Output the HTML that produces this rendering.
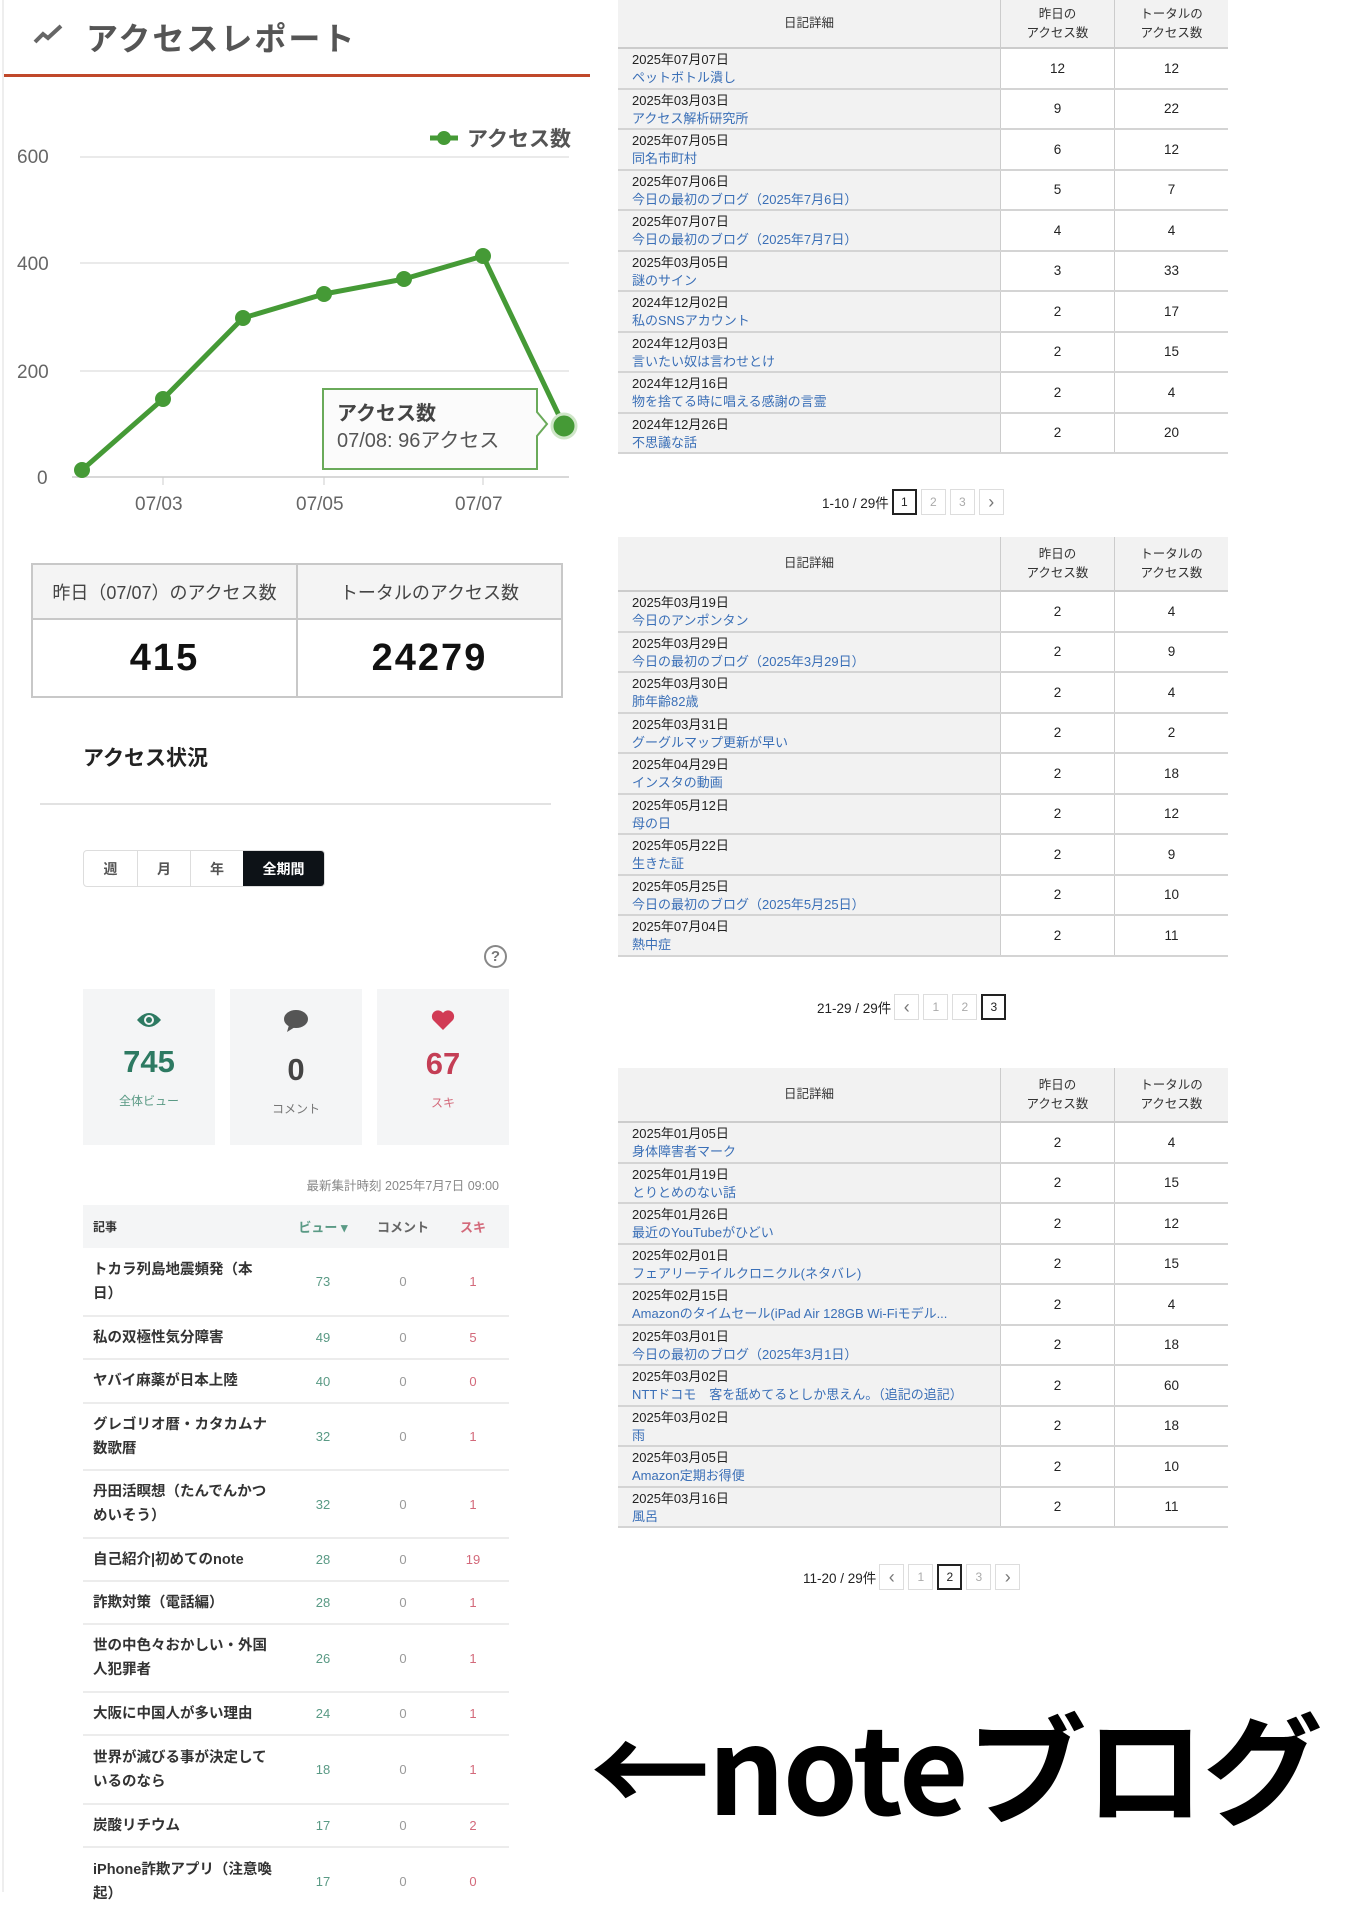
<!DOCTYPE html>
<html><head><meta charset="utf-8"><style>
*{margin:0;padding:0;box-sizing:border-box}
body{width:1346px;height:1892px;background:#fff;position:relative;overflow:hidden;font-family:"Liberation Sans","Noto Sans CJK JP",sans-serif;color:#222}
.a{position:absolute}
.tbl{position:absolute;left:618px;width:610px;font-size:13px}
.tbl .hd{display:flex;background:#f2f2f2;border-bottom:2px solid #ccc;color:#333}
.tbl .hd div{display:flex;align-items:center;justify-content:center;text-align:center;line-height:19px;font-size:12.5px}
.c1{width:383px;border-right:1px solid #ccc}
.c2{width:114px;border-right:1px solid #ccc}
.c3{width:113px}
.tbl .r{display:flex;height:40.5px;border-bottom:2px solid #d4d4d4}
.tbl .r .c1{background:#f2f2f2;padding:2px 0 0 14px;line-height:18px;font-size:13px}
.tbl .r .c1 span{color:#3a6fb7;display:block;white-space:nowrap;overflow:hidden}
.tbl .r .c2,.tbl .r .c3{display:flex;align-items:center;justify-content:center;background:#fff;font-size:13.5px}
.pg{position:absolute;display:flex;align-items:center;font-size:13.5px;color:#222}
.pg b{font-weight:normal;margin-right:3px}
.pg i{font-style:normal;width:25px;height:26px;border:1px solid #ddd;display:flex;align-items:center;justify-content:center;color:#aaa;margin-right:4px;font-size:12px}
.pg i.ar{font-size:18px;color:#777}
.pg i.on{border:2px solid #222;color:#222}
.lst{position:absolute;left:83px;width:426px}
.lst .row{display:flex;align-items:center;border-bottom:2px solid #ececec;font-weight:bold;font-size:14.5px;color:#333}
.lst .t{width:200px;padding-left:10px;padding-right:10px;line-height:24px}
.lst .v{width:80px;text-align:center;color:#5a9a85;font-weight:normal;font-size:13px}
.lst .cm{width:80px;text-align:center;color:#999;font-weight:normal;font-size:13px}
.lst .s{width:60px;text-align:center;color:#d3697a;font-weight:normal;font-size:13px}
</style></head><body>
<div class="a" style="left:2px;top:0;width:2px;height:1892px;background:#eee"></div>
<svg class="a" style="left:33px;top:22px" width="32" height="24" viewBox="0 0 32 24"><polyline points="2,20 10,12 15,16 28,4" fill="none" stroke="#666" stroke-width="4"/></svg>
<div class="a" style="left:86px;top:14px;font-size:32px;font-weight:bold;color:#555;letter-spacing:2px">アクセスレポート</div>
<div class="a" style="left:4px;top:74px;width:586px;height:3px;background:#c0482a"></div>

<svg class="a" style="left:0;top:100px" width="590" height="430">
<g font-family="Liberation Sans, sans-serif" font-size="19" fill="#666">
<text x="17" y="63">600</text><text x="17" y="170">400</text><text x="17" y="278">200</text><text x="37" y="384">0</text>
<text x="135" y="410">07/03</text><text x="296" y="410">07/05</text><text x="455" y="410">07/07</text>
</g>
<g stroke="#e4e4e4" stroke-width="1.5"><line x1="80" y1="57" x2="569" y2="57"/><line x1="80" y1="163" x2="569" y2="163"/><line x1="80" y1="271" x2="569" y2="271"/><line x1="72" y1="377" x2="569" y2="377" stroke="#ccc"/></g>
<g stroke="#ccc"><line x1="163" y1="377" x2="163" y2="385"/><line x1="324" y1="377" x2="324" y2="385"/><line x1="483" y1="377" x2="483" y2="385"/></g>
<line x1="430" y1="38" x2="458" y2="38" stroke="#459a36" stroke-width="5"/><circle cx="444" cy="38" r="7" fill="#459a36"/>
<text x="467" y="46" font-size="21" font-weight="bold" fill="#555" font-family="Noto Sans CJK JP,sans-serif">アクセス数</text>
<polyline points="82,370 163,299 243,218 324,194 404,179 483,156 564,326" fill="none" stroke="#459a36" stroke-width="5" stroke-linejoin="round"/>
<g fill="#459a36"><circle cx="82" cy="370" r="8"/><circle cx="163" cy="299" r="8"/><circle cx="243" cy="218" r="8"/><circle cx="324" cy="194" r="8"/><circle cx="404" cy="179" r="8"/><circle cx="483" cy="156" r="8"/><circle cx="564" cy="326" r="12" stroke="#cfe6c8" stroke-width="3"/></g>
<path d="M323,289 H537 V312 L547,324 L537,336 V369 H323 Z" fill="#fbfbfb" stroke="#6aaa5a" stroke-width="2"/>
<text x="337" y="320" font-size="20" font-weight="bold" fill="#444" font-family="Noto Sans CJK JP,sans-serif">アクセス数</text>
<text x="337" y="347" font-size="20" fill="#555" font-family="Liberation Sans,Noto Sans CJK JP,sans-serif">07/08: 96アクセス</text>
</svg>

<div class="a" style="left:31px;top:563px;width:532px;height:135px;border:2px solid #c8c8c8">
<div style="display:flex;height:55px;background:#f4f4f4;border-bottom:2px solid #c8c8c8;font-size:18px;color:#444">
<div style="width:265px;border-right:2px solid #c8c8c8;display:flex;align-items:center;justify-content:center">昨日（07/07）のアクセス数</div>
<div style="flex:1;display:flex;align-items:center;justify-content:center">トータルのアクセス数</div></div>
<div style="display:flex;height:76px;font-size:38px;font-weight:bold;color:#111;letter-spacing:2px">
<div style="width:265px;border-right:2px solid #c8c8c8;display:flex;align-items:center;justify-content:center">415</div>
<div style="flex:1;display:flex;align-items:center;justify-content:center">24279</div></div></div>

<div class="a" style="left:83px;top:742px;font-size:21px;font-weight:bold;color:#222">アクセス状況</div>
<div class="a" style="left:40px;top:803px;width:511px;height:2px;background:#e2e2e2"></div>
<div class="a" style="left:83px;top:850px;width:242px;height:37px;border:1px solid #ddd;border-radius:4px;display:flex;font-size:14px;font-weight:bold;color:#555;overflow:hidden">
<div style="width:54px;display:flex;align-items:center;justify-content:center;border-right:1px solid #ddd">週</div>
<div style="width:53px;display:flex;align-items:center;justify-content:center;border-right:1px solid #ddd">月</div>
<div style="width:52px;display:flex;align-items:center;justify-content:center">年</div>
<div style="flex:1;display:flex;align-items:center;justify-content:center;background:#0d1217;color:#fff">全期間</div></div>
<div class="a" style="left:484px;top:945px;width:23px;height:23px;border:2px solid #888;border-radius:50%;font-size:15px;color:#777;text-align:center;line-height:19px;font-weight:bold">?</div>

<div class="a" style="left:83px;top:989px;width:132px;height:156px;background:#f4f5f6;text-align:center">
<svg style="margin-top:22px" width="26" height="18" viewBox="0 0 26 18"><path d="M1,9 Q13,-5 25,9 Q13,23 1,9Z" fill="#2d7a62"/><circle cx="13" cy="9" r="5" fill="#f4f5f6"/><circle cx="13" cy="9" r="3" fill="#2d7a62"/></svg>
<div style="font-size:31px;font-weight:bold;color:#2d7a62;margin-top:10px">745</div>
<div style="font-size:12px;color:#5a9a85;margin-top:12px">全体ビュー</div></div>
<div class="a" style="left:230px;top:989px;width:132px;height:156px;background:#f4f5f6;text-align:center">
<svg style="margin-top:20px" width="26" height="24" viewBox="0 0 26 24"><ellipse cx="13" cy="10" rx="12" ry="9" fill="#555"/><path d="M6,16 L4,23 L12,18Z" fill="#555"/></svg>
<div style="font-size:31px;font-weight:bold;color:#444;margin-top:14px">0</div>
<div style="font-size:12px;color:#777;margin-top:12px">コメント</div></div>
<div class="a" style="left:377px;top:989px;width:132px;height:156px;background:#f4f5f6;text-align:center">
<svg style="margin-top:20px" width="24" height="22" viewBox="0 0 24 22"><path d="M12,21 L2,11 A5.5,5.5 0 0 1 12,4 A5.5,5.5 0 0 1 22,11 Z" fill="#d13b55"/></svg>
<div style="font-size:31px;font-weight:bold;color:#c43e55;margin-top:10px">67</div>
<div style="font-size:12px;color:#d3697a;margin-top:12px">スキ</div></div>

<div class="a" style="left:200px;top:1175px;width:299px;text-align:right;font-size:12.5px;color:#888">最新集計時刻 2025年7月7日 09:00</div>
<div class="lst" style="top:1205px">
<div class="row" style="height:43px;background:#f4f5f6;border:0;font-size:12px">
<div class="t">記事</div><div class="v" style="font-weight:bold">ビュー ▾</div><div class="cm" style="color:#666;font-weight:bold">コメント</div><div class="s" style="font-weight:bold">スキ</div></div>
<div class="row" style="height:69px"><div class="t">トカラ列島地震頻発（本日）</div><div class="v">73</div><div class="cm">0</div><div class="s">1</div></div>
<div class="row" style="height:43px"><div class="t">私の双極性気分障害</div><div class="v">49</div><div class="cm">0</div><div class="s">5</div></div>
<div class="row" style="height:44px"><div class="t">ヤバイ麻薬が日本上陸</div><div class="v">40</div><div class="cm">0</div><div class="s">0</div></div>
<div class="row" style="height:67px"><div class="t">グレゴリオ暦・カタカムナ数歌暦</div><div class="v">32</div><div class="cm">0</div><div class="s">1</div></div>
<div class="row" style="height:68px"><div class="t">丹田活瞑想（たんでんかつめいそう）</div><div class="v">32</div><div class="cm">0</div><div class="s">1</div></div>
<div class="row" style="height:43px"><div class="t">自己紹介|初めてのnote</div><div class="v">28</div><div class="cm">0</div><div class="s">19</div></div>
<div class="row" style="height:43px"><div class="t">詐欺対策（電話編）</div><div class="v">28</div><div class="cm">0</div><div class="s">1</div></div>
<div class="row" style="height:68px"><div class="t">世の中色々おかしい・外国人犯罪者</div><div class="v">26</div><div class="cm">0</div><div class="s">1</div></div>
<div class="row" style="height:43px"><div class="t">大阪に中国人が多い理由</div><div class="v">24</div><div class="cm">0</div><div class="s">1</div></div>
<div class="row" style="height:69px"><div class="t">世界が滅びる事が決定しているのなら</div><div class="v">18</div><div class="cm">0</div><div class="s">1</div></div>
<div class="row" style="height:43px"><div class="t">炭酸リチウム</div><div class="v">17</div><div class="cm">0</div><div class="s">2</div></div>
<div class="row" style="height:67px;border:0"><div class="t">iPhone詐欺アプリ（注意喚起）</div><div class="v">17</div><div class="cm">0</div><div class="s">0</div></div>
</div>

<div class="tbl" style="top:0">
<div class="hd" style="height:49px"><div class="c1">日記詳細</div><div class="c2">昨日の<br>アクセス数</div><div class="c3">トータルの<br>アクセス数</div></div>
<div class="r"><div class="c1">2025年07月07日<span>ペットボトル潰し</span></div><div class="c2">12</div><div class="c3">12</div></div>
<div class="r"><div class="c1">2025年03月03日<span>アクセス解析研究所</span></div><div class="c2">9</div><div class="c3">22</div></div>
<div class="r"><div class="c1">2025年07月05日<span>同名市町村</span></div><div class="c2">6</div><div class="c3">12</div></div>
<div class="r"><div class="c1">2025年07月06日<span>今日の最初のブログ（2025年7月6日）</span></div><div class="c2">5</div><div class="c3">7</div></div>
<div class="r"><div class="c1">2025年07月07日<span>今日の最初のブログ（2025年7月7日）</span></div><div class="c2">4</div><div class="c3">4</div></div>
<div class="r"><div class="c1">2025年03月05日<span>謎のサイン</span></div><div class="c2">3</div><div class="c3">33</div></div>
<div class="r"><div class="c1">2024年12月02日<span>私のSNSアカウント</span></div><div class="c2">2</div><div class="c3">17</div></div>
<div class="r"><div class="c1">2024年12月03日<span>言いたい奴は言わせとけ</span></div><div class="c2">2</div><div class="c3">15</div></div>
<div class="r"><div class="c1">2024年12月16日<span>物を捨てる時に唱える感謝の言霊</span></div><div class="c2">2</div><div class="c3">4</div></div>
<div class="r"><div class="c1">2024年12月26日<span>不思議な話</span></div><div class="c2">2</div><div class="c3">20</div></div>
</div>
<div class="pg" style="left:822px;top:489px"><b>1-10 / 29件</b><i class="on">1</i><i>2</i><i>3</i><i class="ar">›</i></div>

<div class="tbl" style="top:537px">
<div class="hd" style="height:55px"><div class="c1">日記詳細</div><div class="c2">昨日の<br>アクセス数</div><div class="c3">トータルの<br>アクセス数</div></div>
<div class="r"><div class="c1">2025年03月19日<span>今日のアンポンタン</span></div><div class="c2">2</div><div class="c3">4</div></div>
<div class="r"><div class="c1">2025年03月29日<span>今日の最初のブログ（2025年3月29日）</span></div><div class="c2">2</div><div class="c3">9</div></div>
<div class="r"><div class="c1">2025年03月30日<span>肺年齢82歳</span></div><div class="c2">2</div><div class="c3">4</div></div>
<div class="r"><div class="c1">2025年03月31日<span>グーグルマップ更新が早い</span></div><div class="c2">2</div><div class="c3">2</div></div>
<div class="r"><div class="c1">2025年04月29日<span>インスタの動画</span></div><div class="c2">2</div><div class="c3">18</div></div>
<div class="r"><div class="c1">2025年05月12日<span>母の日</span></div><div class="c2">2</div><div class="c3">12</div></div>
<div class="r"><div class="c1">2025年05月22日<span>生きた証</span></div><div class="c2">2</div><div class="c3">9</div></div>
<div class="r"><div class="c1">2025年05月25日<span>今日の最初のブログ（2025年5月25日）</span></div><div class="c2">2</div><div class="c3">10</div></div>
<div class="r"><div class="c1">2025年07月04日<span>熱中症</span></div><div class="c2">2</div><div class="c3">11</div></div>
</div>
<div class="pg" style="left:817px;top:994px"><b>21-29 / 29件</b><i class="ar">‹</i><i>1</i><i>2</i><i class="on">3</i></div>

<div class="tbl" style="top:1068px">
<div class="hd" style="height:55px"><div class="c1">日記詳細</div><div class="c2">昨日の<br>アクセス数</div><div class="c3">トータルの<br>アクセス数</div></div>
<div class="r"><div class="c1">2025年01月05日<span>身体障害者マーク</span></div><div class="c2">2</div><div class="c3">4</div></div>
<div class="r"><div class="c1">2025年01月19日<span>とりとめのない話</span></div><div class="c2">2</div><div class="c3">15</div></div>
<div class="r"><div class="c1">2025年01月26日<span>最近のYouTubeがひどい</span></div><div class="c2">2</div><div class="c3">12</div></div>
<div class="r"><div class="c1">2025年02月01日<span>フェアリーテイルクロニクル(ネタバレ)</span></div><div class="c2">2</div><div class="c3">15</div></div>
<div class="r"><div class="c1">2025年02月15日<span>Amazonのタイムセール(iPad Air 128GB Wi-Fiモデル...</span></div><div class="c2">2</div><div class="c3">4</div></div>
<div class="r"><div class="c1">2025年03月01日<span>今日の最初のブログ（2025年3月1日）</span></div><div class="c2">2</div><div class="c3">18</div></div>
<div class="r"><div class="c1">2025年03月02日<span>NTTドコモ　客を舐めてるとしか思えん。（追記の追記）</span></div><div class="c2">2</div><div class="c3">60</div></div>
<div class="r"><div class="c1">2025年03月02日<span>雨</span></div><div class="c2">2</div><div class="c3">18</div></div>
<div class="r"><div class="c1">2025年03月05日<span>Amazon定期お得便</span></div><div class="c2">2</div><div class="c3">10</div></div>
<div class="r"><div class="c1">2025年03月16日<span>風呂</span></div><div class="c2">2</div><div class="c3">11</div></div>
</div>
<div class="pg" style="left:803px;top:1564px"><b>11-20 / 29件</b><i class="ar">‹</i><i>1</i><i class="on">2</i><i>3</i><i class="ar">›</i></div>

<div class="a" style="left:590px;top:1688px;font-size:120px;font-weight:bold;color:#000;letter-spacing:-2px;white-space:nowrap;font-family:'Noto Sans CJK JP','Liberation Sans',sans-serif;line-height:150px">←noteブログ</div>
</body></html>
